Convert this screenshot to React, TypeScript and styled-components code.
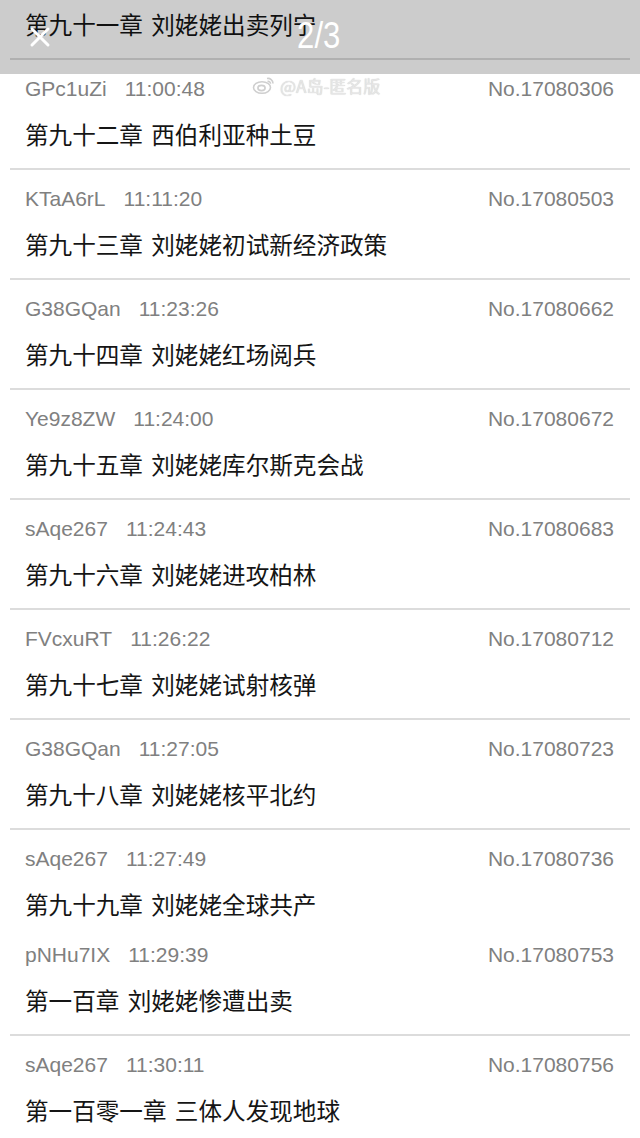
import React from "react";
import styled, { createGlobalStyle } from "styled-components";

const GlobalStyle = createGlobalStyle`
  html, body {
    margin: 0;
    padding: 0;
    background: #ffffff;
  }
  body {
    width: 640px;
    height: 1138px;
    overflow: hidden;
    font-family: "Liberation Sans", "Noto Sans CJK SC", sans-serif;
  }
`;

const Page = styled.div`
  width: 640px;
  height: 1138px;
  overflow: hidden;
  position: relative;
  background: #ffffff;
`;

const List = styled.div`
  display: flex;
  flex-direction: column;
  padding: 0 10px;
`;

const Entry = styled.div<{ $tight?: boolean; $first?: boolean }>`
  display: flex;
  flex-direction: column;
  padding: ${(p) => (p.$first ? "9px" : "17px")} 16px
    ${(p) => (p.$tight ? "5px" : "19px")} 15px;
  border-bottom: 2px solid ${(p) => (p.$tight ? "transparent" : "#dcdcdc")};
`;

const Meta = styled.div`
  display: flex;
  align-items: center;
  height: 24px;
  margin-bottom: 18px;
  font-family: "Liberation Sans", Arial, sans-serif;
  font-size: 21px;
  color: #808080;
  .no {
    margin-left: auto;
  }
`;

const Poster = styled.span`
  margin-right: 18px;
`;

const Title = styled.div`
  height: 30px;
  line-height: 30px;
  font-family: "Noto Sans CJK SC", "Noto Sans", sans-serif;
  font-size: 23.6px;
  word-spacing: 3px;
  color: #151515;
`;

const TopBar = styled.div`
  position: absolute;
  top: 0;
  left: 0;
  right: 0;
  height: 74px;
  background: rgba(0, 0, 0, 0.2);
  display: flex;
  align-items: center;
  padding-left: 29px;
  box-sizing: border-box;
`;

const CloseButton = styled.div`
  width: 22px;
  height: 22px;
  display: flex;
  margin-top: -1px;
`;

const Counter = styled.div`
  position: absolute;
  left: 0;
  right: 0;
  top: 16px;
  text-align: center;
  font-family: "Liberation Sans", Arial, sans-serif;
  font-size: 37px;
  line-height: 40px;
  color: #ffffff;
  pointer-events: none;
  span {
    display: inline-block;
    transform: scaleX(0.84);
    margin-left: -3px;
  }
`;

const Watermark = styled.div`
  position: absolute;
  top: 75px;
  left: 252px;
  display: flex;
  align-items: center;
  gap: 4px;
  height: 20px;
  font-family: "Noto Sans CJK SC", sans-serif;
  font-size: 17px;
  color: #e6e6e6;
  text-shadow: 0 0 1px #c4c4c4;
`;

type Item = { id: string; time: string; no: string; title: string; tight?: boolean };

const items: Item[] = [
  { id: "GPc1uZi", time: "11:00:48", no: "No.17080306", title: "第九十二章 西伯利亚种土豆" },
  { id: "KTaA6rL", time: "11:11:20", no: "No.17080503", title: "第九十三章 刘姥姥初试新经济政策" },
  { id: "G38GQan", time: "11:23:26", no: "No.17080662", title: "第九十四章 刘姥姥红场阅兵" },
  { id: "Ye9z8ZW", time: "11:24:00", no: "No.17080672", title: "第九十五章 刘姥姥库尔斯克会战" },
  { id: "sAqe267", time: "11:24:43", no: "No.17080683", title: "第九十六章 刘姥姥进攻柏林" },
  { id: "FVcxuRT", time: "11:26:22", no: "No.17080712", title: "第九十七章 刘姥姥试射核弹" },
  { id: "G38GQan", time: "11:27:05", no: "No.17080723", title: "第九十八章 刘姥姥核平北约" },
  { id: "sAqe267", time: "11:27:49", no: "No.17080736", title: "第九十九章 刘姥姥全球共产", tight: true },
  { id: "pNHu7IX", time: "11:29:39", no: "No.17080753", title: "第一百章 刘姥姥惨遭出卖" },
  { id: "sAqe267", time: "11:30:11", no: "No.17080756", title: "第一百零一章 三体人发现地球" },
];

const WeiboMark = () => (
  <svg width="24" height="20" viewBox="0 0 24 20" fill="none" stroke="#cfcfcf" strokeWidth="1.6">
    <ellipse cx="10" cy="12.5" rx="8.5" ry="5.8" />
    <ellipse cx="9.5" cy="13" rx="3.6" ry="2.6" />
    <path d="M15 3.5a5 5 0 0 1 6 5" />
    <path d="M15.5 6.5a2.2 2.2 0 0 1 3 2.2" />
  </svg>
);

export default function App() {
  return (
    <>
      <GlobalStyle />
      <Page>
        <List>
          <Entry $first>
            <Title>第九十一章 刘姥姥出卖列宁</Title>
          </Entry>
          {items.map((it) => (
            <Entry key={it.no} $tight={it.tight}>
              <Meta>
                <Poster>{it.id}</Poster>
                <span>{it.time}</span>
                <span className="no">{it.no}</span>
              </Meta>
              <Title>{it.title}</Title>
            </Entry>
          ))}
        </List>
        <Watermark>
          <WeiboMark />
          <span>@A岛-匿名版</span>
        </Watermark>
        <TopBar>
          <CloseButton>
            <svg width="22" height="22" viewBox="0 0 22 22" stroke="#ffffff" strokeWidth="3" strokeLinecap="round">
              <path d="M3 3L19 19M19 3L3 19" />
            </svg>
          </CloseButton>
          <Counter>
            <span>2/3</span>
          </Counter>
        </TopBar>
      </Page>
    </>
  );
}
